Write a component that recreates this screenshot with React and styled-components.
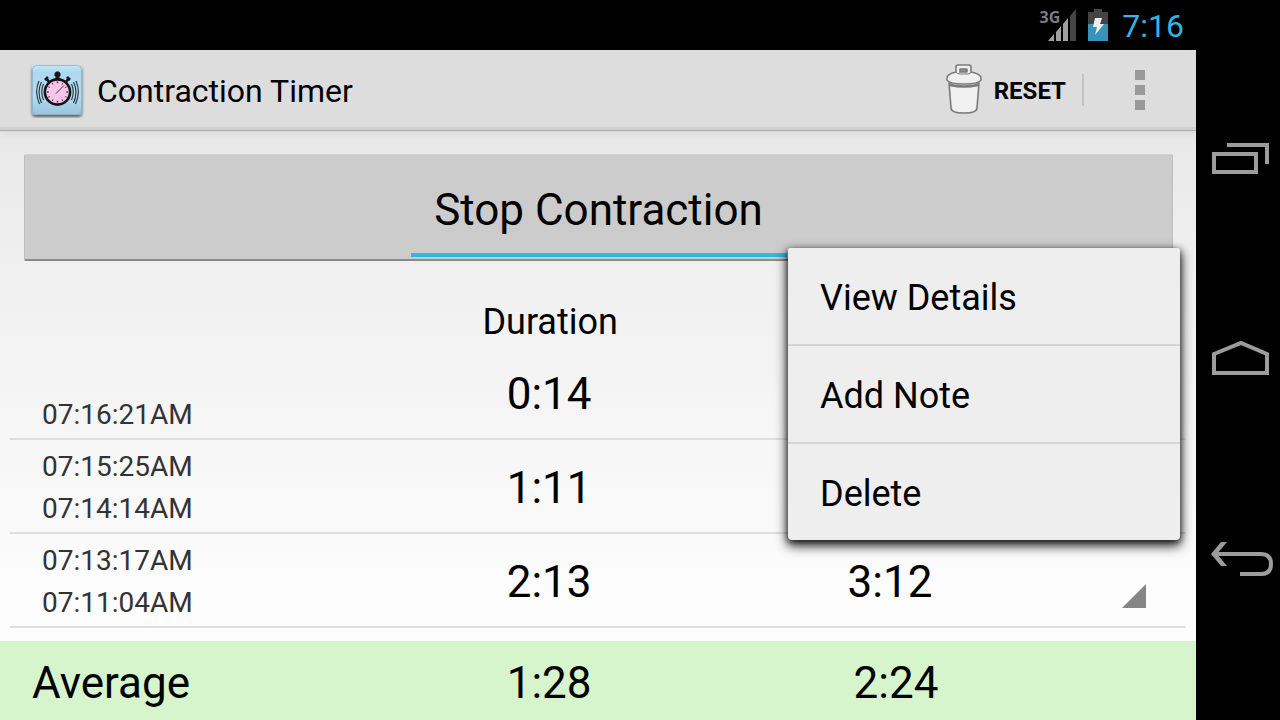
import { useState } from "react";
import styled, { createGlobalStyle } from "styled-components";

const GlobalStyle = createGlobalStyle`
  * {
    box-sizing: border-box;
  }
  body {
    margin: 0;
    background-color: #000000;
    color: #000000;
    font-family: Roboto, "Noto Sans", sans-serif;
  }
  button {
    border: none;
    margin: 0;
    padding: 0;
    background: none;
    color: inherit;
    font-family: inherit;
    cursor: pointer;
  }
`;

const DeviceStyled = styled.div`
  display: flex;
  min-height: 100vh;
  background-color: #000000;
`;

const ScreenStyled = styled.div`
  flex: 1;
  display: flex;
  flex-direction: column;
`;

const StatusBarStyled = styled.div`
  display: flex;
  align-items: center;
  justify-content: flex-end;
  height: 50px;
  padding-right: 12px;
  gap: 12px;
  color: #33b5e5;
  font-size: 32px;
  line-height: 50px;
`;

const ClockStyled = styled.div`
  padding: 2px 0 0 2px;
`;

const SignalStyled = styled.div`
  display: flex;
  align-items: flex-start;
  height: 32px;
  color: #7c7c7c;
  font-family: "Open Sans", sans-serif;
  font-size: 16px;
  font-weight: 700;
  line-height: 16px;
  & svg {
    margin-left: -12px;
  }
`;

const ActionBarStyled = styled.header`
  position: relative;
  z-index: 1;
  display: flex;
  align-items: center;
  height: 81px;
  padding-left: 29px;
  background-color: #dddddd;
  border-bottom: 1px solid #a9a9a9;
  box-shadow: inset 0 -3px 0 #d0d0d0, 0 2px 8px rgba(0, 0, 0, 0.08);
`;

const TitleStyled = styled.h1`
  flex: 1;
  margin: 0 0 0 12px;
  padding-top: 2px;
  font-size: 32px;
  font-weight: 400;
`;

const ResetButtonStyled = styled.button`
  display: flex;
  align-items: center;
  gap: 12px;
  height: 32px;
  padding-right: 16px;
  border-right: 2px solid #c4c4c4;
  font-size: 24px;
  font-weight: 700;
  & span {
    padding-top: 2px;
  }
`;

const OverflowButtonStyled = styled.button`
  display: flex;
  align-items: center;
  justify-content: center;
  width: 112px;
  height: 80px;
`;

const ContentStyled = styled.main`
  position: relative;
  flex: 1;
  display: flex;
  flex-direction: column;
  background: linear-gradient(#e8e8e8, #f0f0f0 24%, #fdfdfd 82%, #ffffff);
`;

const StopButtonStyled = styled.button`
  position: relative;
  height: 107px;
  margin: 23px 23px 0 24px;
  padding-top: 6px;
  background-color: #cccccc;
  border: 1px solid #bdbdbd;
  border-top-color: #d2d2d2;
  border-bottom: 2px solid #8a8a8a;
  border-radius: 2px;
  font-size: 44px;
  &::after {
    content: "";
    position: absolute;
    left: 50%;
    bottom: 2px;
    width: 376px;
    height: 4px;
    margin-left: -188px;
    background-color: #33b5e5;
  }
`;

const TableStyled = styled.table`
  width: 100%;
  table-layout: fixed;
  border-collapse: collapse;
  text-align: center;
  & th,
  & td {
    padding: 0;
    font-weight: 400;
  }
`;

const HeadCellStyled = styled.th`
  height: 85px;
  vertical-align: bottom;
  font-size: 36px;
  line-height: 48px;
`;

const RowStyled = styled.tr`
  height: 94px;
  background: linear-gradient(#dedede, #dedede) center bottom /
    calc(100% - 20px) 2px no-repeat;
`;

const TimesCellStyled = styled.td`
  text-align: left;
  vertical-align: bottom;
  color: #333333;
  font-size: 28px;
  line-height: 42px;
  & div {
    padding-left: 42px;
  }
  & div:last-child {
    padding-bottom: 4px;
  }
`;

const ValueCellStyled = styled.td`
  font-size: 44px;
  line-height: 52px;
  & div {
    padding: 2px 2px 0 0;
  }
`;

const CaretCellStyled = styled.td`
  text-align: right;
  vertical-align: bottom;
  & button {
    display: block;
    margin: 0 50px 20px auto;
  }
`;

const AverageStyled = styled(TableStyled)`
  height: 79px;
  margin-top: auto;
  background-color: #d7f5cd;
  font-size: 44px;
  line-height: 52px;
  & th,
  & td {
    padding: 4px 2px 0 0;
  }
  & th {
    padding-left: 32px;
    text-align: left;
  }
`;

const MenuStyled = styled.div`
  position: absolute;
  top: 117px;
  right: 16px;
  display: flex;
  flex-direction: column;
  width: 392px;
  background-color: #eeeeee;
  border-radius: 2px 2px 4px 4px;
  box-shadow: 0 5px 12px 1px rgba(0, 0, 0, 0.8),
    0 2px 6px rgba(0, 0, 0, 0.6);
`;

const MenuItemStyled = styled.button`
  height: 98px;
  padding: 4px 0 0 32px;
  border-bottom: 2px solid #d4d4d4;
  font-size: 36px;
  text-align: left;
  &:last-child {
    height: 96px;
    border-bottom: none;
  }
`;

const NavBarStyled = styled.nav`
  display: flex;
  flex-direction: column;
  align-items: center;
  justify-content: space-between;
  width: 84px;
  padding: 109px 0 110px 8px;
  & button {
    height: 100px;
  }
`;

const contractions = [
  { times: ["07:16:21AM"], duration: "0:14", frequency: "" },
  { times: ["07:15:25AM", "07:14:14AM"], duration: "1:11", frequency: "" },
  { times: ["07:13:17AM", "07:11:04AM"], duration: "2:13", frequency: "3:12" },
];

const menuItems = ["View Details", "Add Note", "Delete"];

const SignalIcon = () => (
  <svg width="28" height="32" viewBox="0 0 28 32">
    <path d="M0 32 L6 25 V32 Z M8 23 L13 17 V32 H8 Z M15 15 L20 9 V32 H15 Z" fill="#a0a0a0" />
    <path d="M22 7 L28 0 V32 H22 Z" fill="#444444" />
  </svg>
);

const BatteryIcon = () => (
  <svg width="20" height="32" viewBox="0 0 20 32">
    <path d="M6 0 H14 V3 H20 V15 H0 V3 H6 Z" fill="#444444" />
    <path d="M0 15 H20 V32 H0 Z" fill="#3693ba" />
    <path d="M7 9 H14 L12 15 H16 L7 26 L9 18 H5 Z" fill="#eeeeee" />
  </svg>
);

const TimerIcon = () => {
  const ticks = [0, 30, 60, 90, 120, 150, 180, 210, 240, 270, 300, 330];
  return (
    <svg width="56" height="56" viewBox="0 0 56 56">
      <defs>
        <linearGradient id="tile" x1="0" y1="0" x2="0" y2="1">
          <stop offset="0" stopColor="#c4e8fa" />
          <stop offset="0.15" stopColor="#acd8ee" />
          <stop offset="0.6" stopColor="#b5dcf0" />
          <stop offset="1" stopColor="#98c4de" />
        </linearGradient>
        <filter id="tileShadow" x="-20%" y="-20%" width="140%" height="140%">
          <feDropShadow dx="0" dy="2" stdDeviation="1.5" floodOpacity="0.6" />
        </filter>
      </defs>
      <rect x="3" y="3" width="50" height="50" rx="4" fill="url(#tile)" filter="url(#tileShadow)" />
      <rect x="3.5" y="3.5" width="49" height="49" rx="4" fill="none" stroke="#7fa5b8" strokeOpacity="0.6" />
      <path d="M27 10 H30 V18 H27 Z M26 11 H31 V14 H26 Z" fill="#181818" stroke="#181818" />
      <path d="M16 18 L19 15 M41 18 L38 15 M17.5 16.5 L20 20 M39.5 16.5 L37 20" stroke="#181818" strokeWidth="2.6" />
      <circle cx="28.5" cy="30" r="12.6" fill="#f6c6ea" stroke="#141414" strokeWidth="2.6" />
      {ticks.map((angle) => (
        <path
          key={angle}
          d="M28.5 19.5 V21.2"
          stroke="#4a3a48"
          strokeWidth={angle % 90 === 0 ? 1.6 : 1}
          transform={`rotate(${angle} 28.5 30)`}
        />
      ))}
      <path d="M27 31.5 L35 23.5" stroke="#4a3040" strokeWidth="1" />
      <g fill="none" stroke="#263238" strokeWidth="1.1">
        <path d="M14.5 22 Q11 30 14.5 38" />
        <path d="M12.5 20 Q7.5 30 12.5 41" />
        <path d="M10 19 Q5 30 10.5 42" />
        <path d="M42.5 22 Q46 30 42.5 38" />
        <path d="M44.5 20 Q49.5 30 44.5 41" />
        <path d="M47 19 Q52 30 46.5 42" />
      </g>
    </svg>
  );
};

const TrashIcon = () => (
  <svg width="36" height="52" viewBox="1 1 36 52">
    <g fill="#f0f0f0" stroke="#7b7b7b" strokeWidth="1.6" strokeLinejoin="round">
      <path d="M4 20 L6 45 Q6 50 19 50 Q32 50 32 45 L34 20 Z" />
      <path d="M5 22 Q19 25 33 22" fill="none" strokeWidth="2.4" />
      <path d="M2 15 Q2 11 11 9 V4 Q11 2 13 2 H24 Q26 2 26 4 V9 Q36 11 36 15 V17 Q34 21 19 21 Q4 21 2 17 Z" />
      <path d="M11 9 Q12 11 15 11 H22 Q26 11 26 9" fill="none" strokeWidth="1" />
      <rect x="15" y="6" width="7" height="3" fill="#8a8a8a" />
    </g>
  </svg>
);

const App = () => {
  const [menuOpen, setMenuOpen] = useState(true);

  return (
    <DeviceStyled>
      <GlobalStyle />
      <ScreenStyled>
        <StatusBarStyled>
          <SignalStyled>
            3G
            <SignalIcon />
          </SignalStyled>
          <BatteryIcon />
          <ClockStyled>7:16</ClockStyled>
        </StatusBarStyled>

        <ActionBarStyled>
          <TimerIcon />
          <TitleStyled>Contraction Timer</TitleStyled>
          <ResetButtonStyled>
            <TrashIcon />
            <span>RESET</span>
          </ResetButtonStyled>
          <OverflowButtonStyled aria-label="More options">
            <svg width="10" height="40" fill="#999999">
              <rect width="10" height="10" />
              <rect y="15" width="10" height="10" />
              <rect y="30" width="10" height="10" />
            </svg>
          </OverflowButtonStyled>
        </ActionBarStyled>

        <ContentStyled>
          <StopButtonStyled>Stop Contraction</StopButtonStyled>

          <TableStyled>
            <colgroup>
              <col width="32%" />
              <col width="28%" />
              <col width="29%" />
              <col />
            </colgroup>
            <thead>
              <tr>
                <HeadCellStyled />
                <HeadCellStyled>Duration</HeadCellStyled>
                <HeadCellStyled />
                <HeadCellStyled />
              </tr>
            </thead>
            <tbody>
              {contractions.map((item) => (
                <RowStyled key={item.duration}>
                  <TimesCellStyled>
                    {item.times.map((time) => (
                      <div key={time}>{time}</div>
                    ))}
                  </TimesCellStyled>
                  <ValueCellStyled>
                    <div>{item.duration}</div>
                  </ValueCellStyled>
                  <ValueCellStyled>
                    <div>{item.frequency}</div>
                  </ValueCellStyled>
                  <CaretCellStyled>
                    <button
                      aria-label="Contraction options"
                      onClick={() => setMenuOpen(!menuOpen)}
                    >
                      <svg width="24" height="24" display="block">
                        <path d="M24 0 V24 H0 Z" fill="#868686" />
                      </svg>
                    </button>
                  </CaretCellStyled>
                </RowStyled>
              ))}
            </tbody>
          </TableStyled>

          <AverageStyled>
            <colgroup>
              <col width="32%" />
              <col width="28%" />
              <col width="30%" />
              <col />
            </colgroup>
            <tbody>
              <tr>
                <th scope="row">Average</th>
                <td>1:28</td>
                <td>2:24</td>
                <td />
              </tr>
            </tbody>
          </AverageStyled>

          {menuOpen && (
            <MenuStyled role="menu">
              {menuItems.map((label) => (
                <MenuItemStyled
                  key={label}
                  role="menuitem"
                  onClick={() => setMenuOpen(false)}
                >
                  {label}
                </MenuItemStyled>
              ))}
            </MenuStyled>
          )}
        </ContentStyled>
      </ScreenStyled>

      <NavBarStyled>
        <button aria-label="Recent apps">
          <svg width="62" height="32" fill="none" stroke="#9c9c9c" strokeWidth="4">
            <path d="M16 3 H56 V22" />
            <rect x="3" y="12" width="42" height="18" />
          </svg>
        </button>
        <button aria-label="Home">
          <svg width="62" height="36" fill="none" stroke="#9c9c9c" strokeWidth="4">
            <path d="M3 33 V14 L30 3 L56 14 V33 Z" />
          </svg>
        </button>
        <button aria-label="Back">
          <svg width="62" height="36" fill="none" stroke="#9c9c9c">
            <path d="M3 13 H50 Q60 13 60 23 Q60 33 50 33 H29" strokeWidth="4" />
            <path d="M0 13 L10 1 H16 L6 13 L16 25 H10 Z" fill="#9c9c9c" stroke="none" />
          </svg>
        </button>
      </NavBarStyled>
    </DeviceStyled>
  );
};

export default App;
